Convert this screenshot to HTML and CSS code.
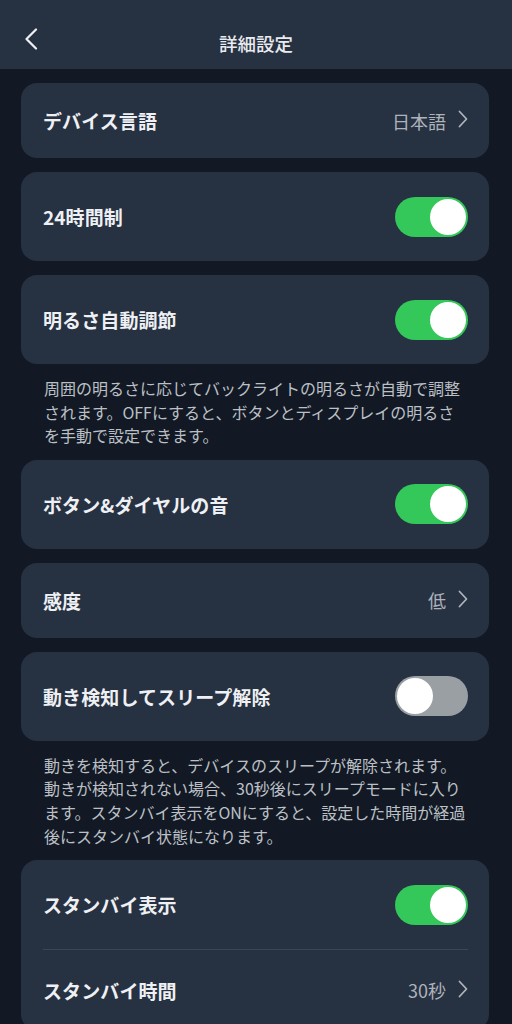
FILE: index.html
```html
<!DOCTYPE html>
<html lang="ja">
<head>
<meta charset="utf-8">
<title>詳細設定</title>
<link rel="stylesheet" href="styles.css">
</head>
<body>
<header class="topbar">
  <span class="back">
    <svg width="14" height="22" viewBox="0 0 14 22"><polyline points="12,1.5 2.5,11 12,20.5" fill="none" stroke="#eef0f3" stroke-width="2.2" stroke-linecap="round" stroke-linejoin="round"/></svg>
  </span>
  <h1 class="title">詳細設定</h1>
  <span></span>
</header>
<main class="content">
  <section class="card">
    <div class="row row-value">
      <span class="label">デバイス言語</span>
      <span class="value">日本語<svg class="chev" width="10" height="18" viewBox="0 0 10 18"><polyline points="1.5,1.5 8.5,9 1.5,16.5" fill="none" stroke="#aeb3ba" stroke-width="1.8" stroke-linecap="round" stroke-linejoin="round"/></svg></span>
    </div>
  </section>
  <section class="card">
    <div class="row row-toggle">
      <span class="label">24時間制</span>
      <span class="toggle on"><span class="knob"></span></span>
    </div>
  </section>
  <section class="card">
    <div class="row row-toggle">
      <span class="label">明るさ自動調節</span>
      <span class="toggle on"><span class="knob"></span></span>
    </div>
  </section>
  <p class="desc">周囲の明るさに応じてバックライトの明るさが自動で調整されます。OFFにすると、ボタンとディスプレイの明るさを手動で設定できます。</p>
  <section class="card">
    <div class="row row-toggle">
      <span class="label">ボタン&amp;ダイヤルの音</span>
      <span class="toggle on"><span class="knob"></span></span>
    </div>
  </section>
  <section class="card">
    <div class="row row-value">
      <span class="label">感度</span>
      <span class="value">低<svg class="chev" width="10" height="18" viewBox="0 0 10 18"><polyline points="1.5,1.5 8.5,9 1.5,16.5" fill="none" stroke="#aeb3ba" stroke-width="1.8" stroke-linecap="round" stroke-linejoin="round"/></svg></span>
    </div>
  </section>
  <section class="card">
    <div class="row row-toggle">
      <span class="label">動き検知してスリープ解除</span>
      <span class="toggle off"><span class="knob"></span></span>
    </div>
  </section>
  <p class="desc">動きを検知すると、デバイスのスリープが解除されます。動きが検知されない場合、30秒後にスリープモードに入ります。スタンバイ表示をONにすると、設定した時間が経過後にスタンバイ状態になります。</p>
  <section class="card">
    <div class="row row-toggle">
      <span class="label">スタンバイ表示</span>
      <span class="toggle on"><span class="knob"></span></span>
    </div>
    <div class="divider"></div>
    <div class="row row-last">
      <span class="label">スタンバイ時間</span>
      <span class="value">30秒<svg class="chev" width="10" height="18" viewBox="0 0 10 18"><polyline points="1.5,1.5 8.5,9 1.5,16.5" fill="none" stroke="#aeb3ba" stroke-width="1.8" stroke-linecap="round" stroke-linejoin="round"/></svg></span>
    </div>
  </section>
</main>
</body>
</html>
```

FILE: styles.css
```css
* { box-sizing: border-box; }
html, body {
  margin: 0;
  padding: 0;
  background: #121924;
  font-family: "Noto Sans CJK JP", "Noto Sans", sans-serif;
  color: #eef0f3;
}
.topbar {
  height: 69px;
  background: #263142;
  display: grid;
  grid-template-columns: 80px 1fr 80px;
  align-items: start;
  padding-top: 24px;
}
.back {
  display: block;
  padding-left: 24px;
  margin-top: 4px;
  line-height: 0;
}
.title {
  margin: 0;
  text-align: center;
  font-size: 18.5px;
  font-weight: 500;
  line-height: 38px;
  color: #e9ebee;
}
.content {
  padding: 14px 23px 0 21px;
  display: flex;
  flex-direction: column;
  gap: 14px;
}
.card {
  background: #263142;
  border-radius: 16px;
  overflow: hidden;
}
.row {
  display: flex;
  align-items: center;
  justify-content: space-between;
  padding: 0 21px 0 22px;
}
.row-value { height: 75px; }
.row-toggle { height: 89px; }
.row-last { height: 80px; }
.label {
  font-size: 19px;
  font-weight: 700;
  color: #eef0f3;
  letter-spacing: 0.1px;
}
.value {
  display: flex;
  align-items: center;
  gap: 12px;
  font-size: 18px;
  font-weight: 400;
  color: #aeb3ba;
}
.chev { display: block; margin-top: -3px; }
.toggle {
  width: 73px;
  height: 40px;
  border-radius: 20px;
  padding: 2px;
  display: flex;
}
.toggle.on { background: #34c759; justify-content: flex-end; }
.toggle.off { background: #9a9fa4; justify-content: flex-start; }
.knob {
  width: 36px;
  height: 36px;
  border-radius: 50%;
  background: #ffffff;
}
.divider {
  height: 1px;
  background: #3a4556;
  margin: 0 21px 0 22px;
}
.desc {
  margin: -1px 0 -2px 0;
  padding: 0 21px 0 23px;
  font-size: 16px;
  line-height: 23.6px;
  color: #bcc0c6;
}
```
